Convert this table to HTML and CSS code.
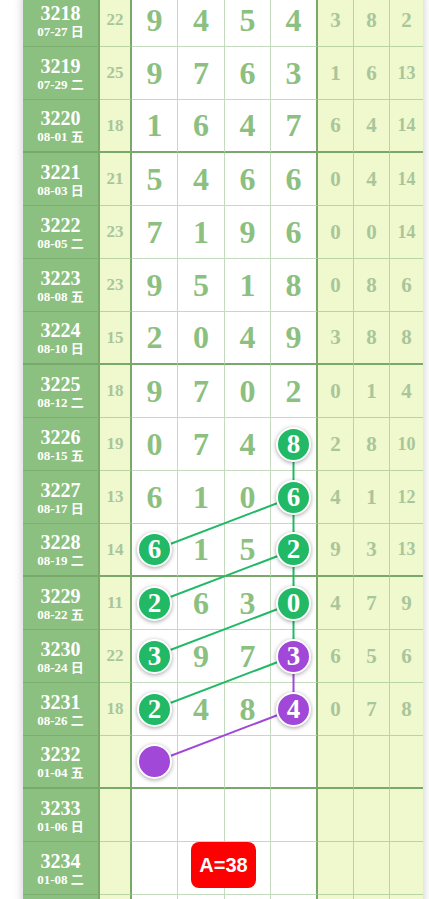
FILE: index.html
```html
<!DOCTYPE html>
<html lang="zh">
<head>
  <meta charset="UTF-8">
  <title>走势图</title>
  <link rel="stylesheet" href="styles.css">
</head>
<body>

  <div class="chart">

    <div class="row">
      <div class="cell issue"><span class="no">3218</span><span class="date">07-27 日</span></div>
      <div class="cell sum">22</div>
      <div class="cell num">9</div><div class="cell num">4</div><div class="cell num">5</div><div class="cell num last">4</div>
      <div class="cell dist">3</div><div class="cell dist">8</div><div class="cell dist last">2</div>
    </div>
    <div class="row">
      <div class="cell issue"><span class="no">3219</span><span class="date">07-29 二</span></div>
      <div class="cell sum">25</div>
      <div class="cell num">9</div><div class="cell num">7</div><div class="cell num">6</div><div class="cell num last">3</div>
      <div class="cell dist">1</div><div class="cell dist">6</div><div class="cell dist last sm">13</div>
    </div>
    <div class="row end">
      <div class="cell issue"><span class="no">3220</span><span class="date">08-01 五</span></div>
      <div class="cell sum">18</div>
      <div class="cell num">1</div><div class="cell num">6</div><div class="cell num">4</div><div class="cell num last">7</div>
      <div class="cell dist">6</div><div class="cell dist">4</div><div class="cell dist last sm">14</div>
    </div>

    <div class="row">
      <div class="cell issue"><span class="no">3221</span><span class="date">08-03 日</span></div>
      <div class="cell sum">21</div>
      <div class="cell num">5</div><div class="cell num">4</div><div class="cell num">6</div><div class="cell num last">6</div>
      <div class="cell dist">0</div><div class="cell dist">4</div><div class="cell dist last sm">14</div>
    </div>
    <div class="row">
      <div class="cell issue"><span class="no">3222</span><span class="date">08-05 二</span></div>
      <div class="cell sum">23</div>
      <div class="cell num">7</div><div class="cell num">1</div><div class="cell num">9</div><div class="cell num last">6</div>
      <div class="cell dist">0</div><div class="cell dist">0</div><div class="cell dist last sm">14</div>
    </div>
    <div class="row">
      <div class="cell issue"><span class="no">3223</span><span class="date">08-08 五</span></div>
      <div class="cell sum">23</div>
      <div class="cell num">9</div><div class="cell num">5</div><div class="cell num">1</div><div class="cell num last">8</div>
      <div class="cell dist">0</div><div class="cell dist">8</div><div class="cell dist last">6</div>
    </div>
    <div class="row end">
      <div class="cell issue"><span class="no">3224</span><span class="date">08-10 日</span></div>
      <div class="cell sum">15</div>
      <div class="cell num">2</div><div class="cell num">0</div><div class="cell num">4</div><div class="cell num last">9</div>
      <div class="cell dist">3</div><div class="cell dist">8</div><div class="cell dist last">8</div>
    </div>

    <div class="row">
      <div class="cell issue"><span class="no">3225</span><span class="date">08-12 二</span></div>
      <div class="cell sum">18</div>
      <div class="cell num">9</div><div class="cell num">7</div><div class="cell num">0</div><div class="cell num last">2</div>
      <div class="cell dist">0</div><div class="cell dist">1</div><div class="cell dist last">4</div>
    </div>
    <div class="row">
      <div class="cell issue"><span class="no">3226</span><span class="date">08-15 五</span></div>
      <div class="cell sum">19</div>
      <div class="cell num">0</div><div class="cell num">7</div><div class="cell num">4</div>
      <div class="cell num last"><span class="ball green">8</span></div>
      <div class="cell dist">2</div><div class="cell dist">8</div><div class="cell dist last sm">10</div>
    </div>
    <div class="row">
      <div class="cell issue"><span class="no">3227</span><span class="date">08-17 日</span></div>
      <div class="cell sum">13</div>
      <div class="cell num">6</div><div class="cell num">1</div><div class="cell num">0</div>
      <div class="cell num last"><span class="ball green">6</span></div>
      <div class="cell dist">4</div><div class="cell dist">1</div><div class="cell dist last sm">12</div>
    </div>
    <div class="row end">
      <div class="cell issue"><span class="no">3228</span><span class="date">08-19 二</span></div>
      <div class="cell sum">14</div>
      <div class="cell num"><span class="ball green">6</span></div><div class="cell num">1</div><div class="cell num">5</div>
      <div class="cell num last"><span class="ball green">2</span></div>
      <div class="cell dist">9</div><div class="cell dist">3</div><div class="cell dist last sm">13</div>
    </div>

    <div class="row">
      <div class="cell issue"><span class="no">3229</span><span class="date">08-22 五</span></div>
      <div class="cell sum">11</div>
      <div class="cell num"><span class="ball green">2</span></div><div class="cell num">6</div><div class="cell num">3</div>
      <div class="cell num last"><span class="ball green">0</span></div>
      <div class="cell dist">4</div><div class="cell dist">7</div><div class="cell dist last">9</div>
    </div>
    <div class="row">
      <div class="cell issue"><span class="no">3230</span><span class="date">08-24 日</span></div>
      <div class="cell sum">22</div>
      <div class="cell num"><span class="ball green">3</span></div><div class="cell num">9</div><div class="cell num">7</div>
      <div class="cell num last"><span class="ball purple">3</span></div>
      <div class="cell dist">6</div><div class="cell dist">5</div><div class="cell dist last">6</div>
    </div>
    <div class="row">
      <div class="cell issue"><span class="no">3231</span><span class="date">08-26 二</span></div>
      <div class="cell sum">18</div>
      <div class="cell num"><span class="ball green">2</span></div><div class="cell num">4</div><div class="cell num">8</div>
      <div class="cell num last"><span class="ball purple">4</span></div>
      <div class="cell dist">0</div><div class="cell dist">7</div><div class="cell dist last">8</div>
    </div>
    <div class="row end">
      <div class="cell issue"><span class="no">3232</span><span class="date">01-04 五</span></div>
      <div class="cell sum"></div>
      <div class="cell num"><span class="ball purple"></span></div><div class="cell num"></div><div class="cell num"></div><div class="cell num last"></div>
      <div class="cell dist"></div><div class="cell dist"></div><div class="cell dist last"></div>
    </div>

    <div class="row">
      <div class="cell issue"><span class="no">3233</span><span class="date">01-06 日</span></div>
      <div class="cell sum"></div>
      <div class="cell num"></div><div class="cell num"></div><div class="cell num"></div><div class="cell num last"></div>
      <div class="cell dist"></div><div class="cell dist"></div><div class="cell dist last"></div>
    </div>
    <div class="row">
      <div class="cell issue"><span class="no">3234</span><span class="date">01-08 二</span></div>
      <div class="cell sum"></div>
      <div class="cell num"></div><div class="cell num"></div><div class="cell num"></div><div class="cell num last"></div>
      <div class="cell dist"></div><div class="cell dist"></div><div class="cell dist last"></div>
    </div>
    <div class="row">
      <div class="cell issue"></div>
      <div class="cell sum"></div>
      <div class="cell num"></div><div class="cell num"></div><div class="cell num"></div><div class="cell num last"></div>
      <div class="cell dist"></div><div class="cell dist"></div><div class="cell dist last"></div>
    </div>

    <!-- trend lines between the balls -->
    <svg class="lines" width="400" height="960">
      <g stroke="#21b966" stroke-width="2">
        <line x1="270.5" y1="450" x2="270.5" y2="662"/>
        <line x1="270.5" y1="503" x2="131.5" y2="556"/>
        <line x1="270.5" y1="556" x2="131.5" y2="609"/>
        <line x1="270.5" y1="609" x2="131.5" y2="662"/>
        <line x1="270.5" y1="662" x2="131.5" y2="715"/>
      </g>
      <g stroke="#a148d9" stroke-width="2">
        <line x1="270.5" y1="662" x2="270.5" y2="715"/>
        <line x1="270.5" y1="715" x2="131.5" y2="768"/>
      </g>
    </svg>

    <div class="badge">A=38</div>
  </div>

</body>
</html>
```

FILE: styles.css
```css
body {
  margin: 0;
  background: #fff;
  font-family: "Liberation Serif", "Noto Sans CJK SC", serif;
  overflow: hidden;
}
.chart {
  position: relative;
  width: 400px;
  margin: -6px 0 0 23px;
  box-shadow: 0 0 9px rgba(0,0,0,0.22);
}
.row {
  display: grid;
  grid-template-columns: 77px 32px 46px 47px 46px 47px 36px 36px 33px;
  height: 53px;
}
.cell {
  box-sizing: border-box;
  display: flex;
  align-items: center;
  justify-content: center;
  font-weight: bold;
  border-bottom: 1px solid #c3dabe;
}
.issue {
  flex-direction: column;
  background: #8cc080;
  color: #fff;
  border-right: 2px solid #78a86a;
  border-bottom-color: #7db070;
}
.issue .no {
  font-size: 20px;
  line-height: 22px;
}
.issue .date {
  font-size: 13px;
  line-height: 15px;
}
.sum {
  background: #f0f8cd;
  color: #a9c69b;
  font-size: 17px;
  border-right: 2px solid #78a86a;
  border-bottom-color: #bad3a3;
}
.num {
  background: #fff;
  color: #8cc080;
  font-size: 32px;
  border-right: 1px solid #c3dabe;
}
.num.last {
  border-right: 2px solid #78a86a;
}
.dist {
  background: #f0f8cd;
  color: #a9c69b;
  font-size: 21px;
  border-right: 1px solid #bad3a3;
  border-bottom-color: #bad3a3;
}
.dist.last {
  border-right: none;
}
.dist.sm {
  font-size: 18px;
}
.row.end .cell {
  border-bottom: 2px solid #78a86a;
}
.ball {
  position: relative;
  z-index: 2;
  width: 31px;
  height: 31px;
  border-radius: 50%;
  border: 2px solid #fff;
  box-shadow: 0 1px 4px rgba(0,0,0,0.35);
  color: #fff;
  font-size: 27px;
  line-height: 31px;
  text-align: center;
}
.ball.green {
  background: #21b966;
}
.ball.purple {
  background: #a148d9;
}
.lines {
  position: absolute;
  left: 0;
  top: 0;
  z-index: 1;
}
.badge {
  position: absolute;
  left: 168px;
  top: 848px;
  z-index: 3;
  width: 65px;
  height: 46px;
  display: flex;
  align-items: center;
  justify-content: center;
  background: #ff0000;
  border-radius: 8px;
  color: #fff;
  font: bold 20px "Liberation Sans", sans-serif;
}
```
